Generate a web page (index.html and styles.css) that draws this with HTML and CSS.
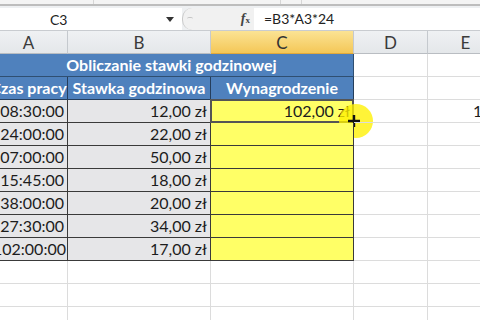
FILE: index.html
```html
<!DOCTYPE html>
<html lang="pl">
<head>
    <meta charset="UTF-8">
    <title>Obliczanie stawki godzinowej</title>
    <link rel="stylesheet" href="styles.css">
</head>
<body>

<!-- bottom edge of the ribbon -->
<div class="ribbon-edge">
    <span class="sep s1"></span>
    <span class="sep s2"></span>
    <span class="sep s3"></span>
</div>

<!-- formula bar -->
<div class="formula-bar">
    <div class="name-box">
        <span class="cell-ref">C3</span>
        <span class="dd"></span>
    </div>
    <div class="fx-box">
        <span class="grip"></span>
        <span class="fx"><i>f</i><small>x</small></span>
    </div>
    <div class="formula">=B3*A3*24</div>
</div>

<!-- worksheet -->
<div class="sheet">
    <div class="col-head">A</div>
    <div class="col-head">B</div>
    <div class="col-head active">C</div>
    <div class="col-head">D</div>
    <div class="col-head">E</div>
    <div class="col-head">F</div>

    <div class="cell title span3">Obliczanie stawki godzinowej</div>
    <div class="cell"></div>
    <div class="cell"></div>
    <div class="cell"></div>

    <div class="cell head">Czas pracy</div>
    <div class="cell head">Stawka godzinowa</div>
    <div class="cell head">Wynagrodzenie</div>
    <div class="cell"></div>
    <div class="cell"></div>
    <div class="cell"></div>

    <div class="cell data">08:30:00</div>
    <div class="cell data">12,00 zł</div>
    <div class="cell pay selected">102,00 zł
        <span class="cursor-glow"></span>
        <svg class="crosshair" width="14" height="14" viewBox="0 0 14 14">
            <path d="M7 1v12M1 7h12" stroke="#111" stroke-width="2.4"/>
        </svg>
    </div>
    <div class="cell"></div>
    <div class="cell spill">102</div>
    <div class="cell"></div>

    <div class="cell data">24:00:00</div>
    <div class="cell data">22,00 zł</div>
    <div class="cell pay"></div>
    <div class="cell"></div>
    <div class="cell"></div>
    <div class="cell"></div>

    <div class="cell data">07:00:00</div>
    <div class="cell data">50,00 zł</div>
    <div class="cell pay"></div>
    <div class="cell"></div>
    <div class="cell"></div>
    <div class="cell"></div>

    <div class="cell data">15:45:00</div>
    <div class="cell data">18,00 zł</div>
    <div class="cell pay"></div>
    <div class="cell"></div>
    <div class="cell"></div>
    <div class="cell"></div>

    <div class="cell data">38:00:00</div>
    <div class="cell data">20,00 zł</div>
    <div class="cell pay"></div>
    <div class="cell"></div>
    <div class="cell"></div>
    <div class="cell"></div>

    <div class="cell data">27:30:00</div>
    <div class="cell data">34,00 zł</div>
    <div class="cell pay"></div>
    <div class="cell"></div>
    <div class="cell"></div>
    <div class="cell"></div>

    <div class="cell data last">102:00:00</div>
    <div class="cell data last">17,00 zł</div>
    <div class="cell pay last"></div>
    <div class="cell"></div>
    <div class="cell"></div>
    <div class="cell"></div>

    <div class="cell"></div><div class="cell"></div><div class="cell"></div><div class="cell"></div><div class="cell"></div><div class="cell"></div>
    <div class="cell"></div><div class="cell"></div><div class="cell"></div><div class="cell"></div><div class="cell"></div><div class="cell"></div>
    <div class="cell"></div><div class="cell"></div><div class="cell"></div><div class="cell"></div><div class="cell"></div><div class="cell"></div>
</div>

</body>
</html>
```

FILE: styles.css
```css
body {
    margin: 0;
    width: 480px;
    height: 320px;
    overflow: hidden;
    background-color: #fff;
    font-family: Lato, "Open Sans", sans-serif;
    color: #1c1c1c;
}
.ribbon-edge {
    height: 4px;
    display: flex;
    background-color: #f4f4f4;
    border-bottom: 2px solid #bdbdbd;
}
.sep {
    width: 1px;
    height: 4px;
    background-color: #d6d6d6;
}
.s1 {
    margin-left: 93px;
}
.s2 {
    margin-left: 186px;
}
.s3 {
    margin-left: 20px;
}
.formula-bar {
    display: flex;
    height: 22px;
    padding-top: 2px;
    background-color: #eef0f2;
    border-bottom: 1px solid #c9ccd0;
}
.name-box {
    width: 182px;
    display: flex;
    align-items: center;
    background-color: #fff;
}
.cell-ref {
    flex: 1;
    padding-left: 50px;
    font-size: 14px;
    color: #222;
}
.dd {
    width: 0;
    height: 0;
    margin-right: 8px;
    border-left: 4px solid transparent;
    border-right: 4px solid transparent;
    border-top: 5px solid #333;
}
.fx-box {
    width: 71px;
    display: flex;
    align-items: center;
    justify-content: space-between;
    background-color: #f1f1f1;
    border-radius: 10px 0 0 10px;
    border-left: 1px solid #c9c9c9;
}
.grip {
    width: 6px;
    height: 3px;
    margin-left: 4px;
    border-top: 1px solid #c6c6c6;
    border-radius: 3px;
}
.fx {
    margin-right: 4px;
    font-family: "Liberation Serif", serif;
    font-weight: bold;
    font-size: 14px;
    color: #444;
}
.fx small {
    font-size: 9px;
}
.formula {
    flex: 1;
    padding-left: 10px;
    background-color: #fff;
    font-size: 14px;
    line-height: 22px;
    color: #222;
}
.sheet {
    display: grid;
    grid-template-columns: 78px 143px 143px 74px 76px 74px;
    grid-auto-rows: 23px;
    margin-left: -10px;
}
.col-head {
    display: flex;
    align-items: center;
    justify-content: center;
    background: linear-gradient(#eff1f3, #e4e7ea);
    border-right: 1px solid #c5c9ce;
    border-bottom: 1px solid #b9bdc2;
    font-size: 17px;
    color: #3b3b3b;
}
.col-head.active {
    background: linear-gradient(#fbe394, #f4c757);
    border-bottom-color: #e2a93a;
    color: #333;
}
.cell {
    position: relative;
    box-sizing: border-box;
    border-right: 1px solid #dcdcdc;
    border-bottom: 1px solid #dcdcdc;
    padding: 0 3px;
    font-size: 16px;
    line-height: 22px;
    white-space: nowrap;
}
.span3 {
    grid-column: span 3;
}
.title {
    background-color: #4f81bd;
    border-right-color: #2f4f72;
    border-bottom-color: #2f4f72;
    color: #fff;
    font-weight: bold;
    text-align: center;
}
.head {
    background-color: #4f81bd;
    border-color: #253e5c;
    color: #fff;
    font-weight: bold;
    text-align: center;
    padding: 0;
}
.data {
    background-color: #e6e6e8;
    border-color: #3a3a3a;
    text-align: right;
}
.pay {
    background-color: #ffff66;
    border-color: #3a3a3a;
    text-align: right;
}
.last {
    border-bottom-color: #3a3a3a;
}
.selected::before {
    content: "";
    position: absolute;
    left: -1px;
    top: -1px;
    right: -1px;
    bottom: -1px;
    border: 2px solid #555;
}
.cursor-glow {
    position: absolute;
    right: -20px;
    bottom: -16px;
    width: 34px;
    height: 34px;
    border-radius: 50%;
    background-color: rgba(255, 241, 0, 0.78);
}
.crosshair {
    position: absolute;
    right: -8px;
    bottom: -6px;
}
.spill {
    padding-left: 45px;
    overflow: visible;
}
```
